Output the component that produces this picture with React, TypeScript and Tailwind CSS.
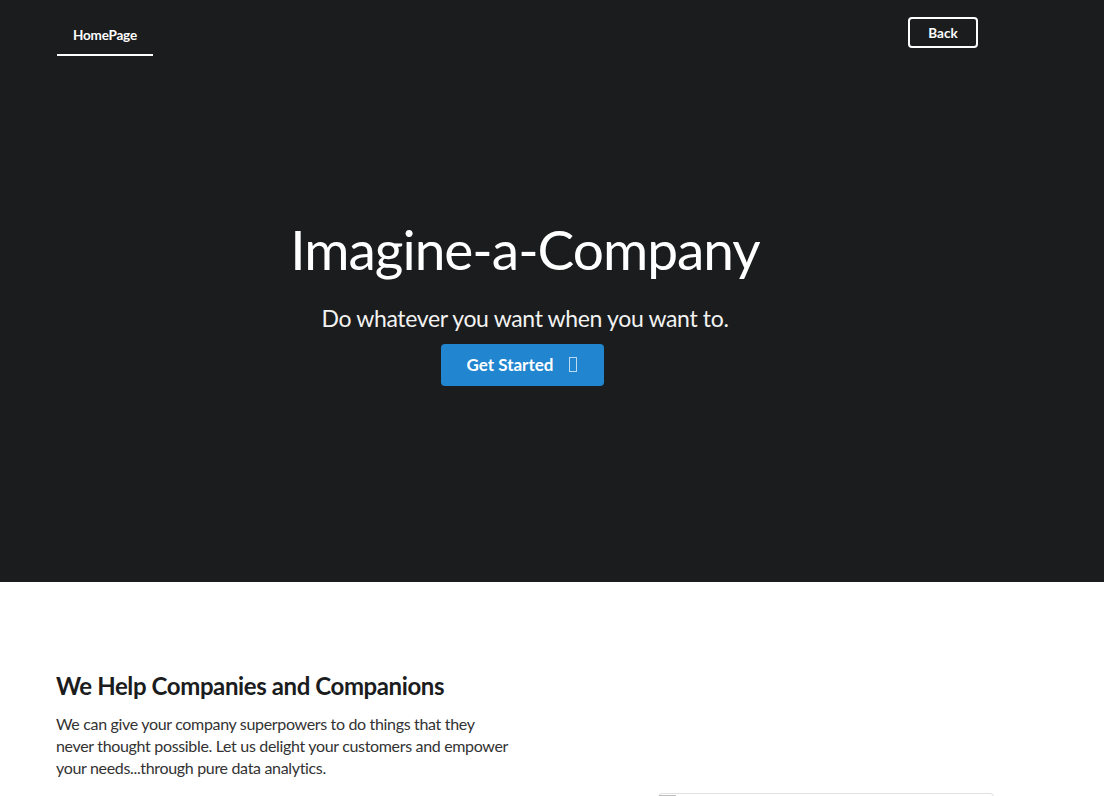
import React from "react";

const App: React.FC = () => {
  return (
    <div className="min-h-screen bg-white font-['Lato','Noto_Sans',sans-serif]">
      {/* Masthead */}
      <div className="bg-[#1b1c1d] h-[582px]">
        <div className="ml-[57px] w-[936px] flex flex-col">
          {/* Top menu */}
          <div className="flex items-start justify-between">
            <a className="pt-[27px] pb-[10px] px-4 border-b-2 border-white text-white text-[13.5px] leading-[17px] font-bold tracking-[-0.2px]">
              HomePage
            </a>
            <button className="mt-[17px] mr-[15px] w-[70px] h-[31px] pt-[2px] border-2 border-white rounded-[4px] text-white text-[13.5px] font-bold leading-none">
              Back
            </button>
          </div>

          {/* Hero */}
          <div className="flex flex-col items-center mt-[160px]">
            <h1 className="text-white text-[55px] leading-[1.2] font-normal tracking-[-1px]">
              Imagine-a-Company
            </h1>
            <h2 className="mt-[23px] text-[#f2f2f2] text-[23px] leading-[1.2] font-normal tracking-[-0.35px]">
              Do whatever you want when you want to.
            </h2>
            <button className="mt-[11px] -ml-[5px] h-[42px] pl-[26px] pr-[27px] flex items-center gap-[16px] bg-[#2185d0] rounded-[4px] text-white text-[17px] font-bold">
              Get Started
              <span className="w-[8px] h-[15px] border border-white/70"></span>
            </button>
          </div>
        </div>
      </div>

      {/* Intro section */}
      <div className="pt-[88px]">
        <div className="ml-[56px] w-[938px] flex justify-between">
          <div className="w-[520px]">
            <h3 className="text-[#1b1c1d] text-[24px] leading-[31px] font-bold tracking-[-0.4px]">
              We Help Companies and Companions
            </h3>
            <p className="mt-[12px] text-[#333333] text-[16px] leading-[22px] tracking-[-0.33px]">
              We can give your company superpowers to do things that they
              <br />
              never thought possible. Let us delight your customers and empower
              <br />
              your needs...through pure data analytics.
            </p>
          </div>
          <div className="w-[336px] pt-[123px]">
            <div className="h-[200px] border border-[#e0e0e0] rounded-[4px] bg-white">
              <div className="mt-px w-[17px] h-[2px] bg-[#bdbdbd]"></div>
            </div>
          </div>
        </div>
      </div>
    </div>
  );
};

export default App;
